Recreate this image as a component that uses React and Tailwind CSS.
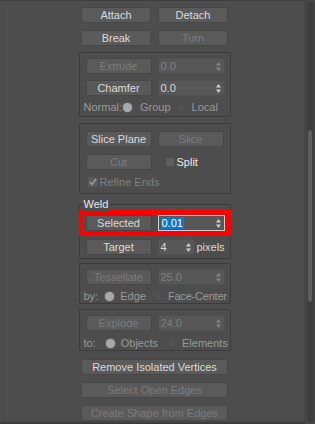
import React from "react";

const FONT = { fontFamily: '"Liberation Sans", Arial, sans-serif' };

function Btn({ children, w = "w-[70px]", dis }) {
  return (
    <div
      className={`${w} h-[16px] shrink-0 flex items-center justify-center whitespace-nowrap rounded-[2px] border border-[#474747] bg-[#5a5a5a] text-[11px] leading-none ${
        dis ? "text-[#7c7c7c]" : "text-[#dadada]"
      }`}
    >
      {children}
    </div>
  );
}

function Arrows({ dis }) {
  const c = dis ? "#858585" : "#d0d0d0";
  return (
    <svg width="5" height="9" viewBox="0 0 5 9" className="shrink-0">
      <polygon points="2.5,0 5,3.5 0,3.5" fill={c} />
      <polygon points="0,5.5 5,5.5 2.5,9" fill={c} />
    </svg>
  );
}

function Spin({ value, dis, w = "w-[67px]", sel }) {
  return (
    <div
      className={`${w} h-[16px] shrink-0 flex items-center justify-between bg-[#575757] border ${
        sel ? "border-[#cfcfcf]" : "border-[#505050]"
      } pl-[2px] pr-[3px] text-[11px] leading-none`}
    >
      {sel ? (
        <span className="bg-[#0a78d7] text-white h-[12px] px-[1px] flex items-center">{value}</span>
      ) : (
        <span className={dis ? "text-[#818181]" : "text-[#dadada]"}>{value}</span>
      )}
      <Arrows dis={dis} />
    </div>
  );
}

function Radio({ on }) {
  return (
    <span
      className={`block w-[9px] h-[9px] rounded-full shrink-0 ${
        on ? "bg-[#a9a9a9] shadow-[0_0_2px_#8f8f8f]" : "bg-[#525252] border border-[#4a4a4a]"
      }`}
    />
  );
}

function Group({ children, className = "" }) {
  return (
    <div className={`w-[152px] border border-[#3b3b3b] rounded-[2px] px-[6px] flex flex-col ${className}`}>
      {children}
    </div>
  );
}

const lbl = "whitespace-nowrap text-[11px] leading-none text-[#999999]";

export default function App() {
  return (
    <div className="w-[315px] h-[424px] bg-[#4d4d4d] flex overflow-hidden" style={FONT}>
      <div className="w-[305px] h-full flex flex-col border-t border-t-[#3e3e3e] border-b-2 border-b-[#3c3c3c] border-r border-r-[#444444]">
        <div className="flex-1 pl-[2px] flex flex-col items-center overflow-hidden border-l border-l-[#474747] ml-[2px]">
          <div className="mt-[6px] flex gap-[7px]">
            <Btn>Attach</Btn>
            <Btn>Detach</Btn>
          </div>
          <div className="mt-[7px] flex gap-[7px]">
            <Btn>Break</Btn>
            <Btn dis>Turn</Btn>
          </div>

          <Group className="mt-[6px] pt-[5px] pb-[2px]">
            <div className="flex gap-[6px]">
              <Btn w="w-[66px]" dis>Extrude</Btn>
              <Spin value="0.0" dis />
            </div>
            <div className="mt-[6px] flex gap-[6px]">
              <Btn w="w-[66px]">Chamfer</Btn>
              <Spin value="0.0" />
            </div>
            <div className="mt-[5px] -ml-[2px] h-[13px] flex items-center">
              <span className={lbl}>Normal:</span>
              <span className="ml-[1px]"><Radio on /></span>
              <span className={`ml-[8px] ${lbl}`}>Group</span>
              <span className="ml-[6px]"><Radio /></span>
              <span className={`ml-[6px] ${lbl}`}>Local</span>
            </div>
          </Group>

          <Group className="mt-[6px] pt-[7px] pb-[5px]">
            <div className="flex gap-[6px]">
              <Btn w="w-[66px]">Slice Plane</Btn>
              <Btn w="w-[66px]" dis>Slice</Btn>
            </div>
            <div className="mt-[7px] flex items-center">
              <Btn w="w-[66px]" dis>Cut</Btn>
              <span className="ml-[13px] w-[10px] h-[10px] bg-[#5f5f5f] border border-[#4c4c4c] rounded-[1px]" />
              <span className="ml-[2px] text-[11px] leading-none text-[#ececec]">Split</span>
            </div>
            <div className="mt-[6px] flex items-center h-[12px] ml-[2px]">
              <span className="w-[10px] h-[10px] bg-[#5a5a5a] rounded-[1px] flex items-center justify-center">
                <svg width="8" height="8" viewBox="0 0 8 8">
                  <polyline points="1,4 3,6.5 7,1" fill="none" stroke="#9a9a9a" strokeWidth="1.6" />
                </svg>
              </span>
              <span className="ml-[2px] text-[11px] leading-none text-[#818181]">Refine Ends</span>
            </div>
          </Group>

          <div className="mt-[4px] w-[152px] flex flex-col">
            <span className="relative z-10 self-start ml-[4px] px-[1px] bg-[#4d4d4d] h-[13px] text-[11px] leading-[13px] text-[#e8e8e8]">
              Weld
            </span>
            <div className="-mt-[7px] border border-[#3b3b3b] rounded-[2px] px-[6px] pt-[5px] pb-[3px] flex flex-col">
              <div className="-mx-[7px] border-[5px] border-[#ff0000] pl-[2px] flex gap-[6px]">
                <Btn w="w-[66px]">Selected</Btn>
                <Spin value="0.01" sel />
              </div>
              <div className="mt-[3px] flex items-center gap-[6px]">
                <Btn w="w-[66px]">Target</Btn>
                <Spin value="4" w="w-[37px]" />
                <span className="-ml-[4px] text-[11px] leading-none text-[#dadada]">pixels</span>
              </div>
            </div>
          </div>

          <Group className="mt-[4px] pt-[5px] pb-[0px]">
            <div className="flex gap-[6px]">
              <Btn w="w-[66px]" dis>Tessellate</Btn>
              <Spin value="25.0" dis />
            </div>
            <div className="mt-[5px] -ml-[2px] h-[13px] flex items-center">
              <span className={lbl}>by:</span>
              <span className="ml-[7px]"><Radio on /></span>
              <span className={`ml-[6px] ${lbl}`}>Edge</span>
              <span className="ml-[7px]"><Radio /></span>
              <span className={`ml-[6px] ${lbl} tracking-[-0.2px]`}>Face-Center</span>
            </div>
          </Group>

          <Group className="mt-[5px] pt-[5px] pb-[0px]">
            <div className="flex gap-[6px]">
              <Btn w="w-[66px]" dis>Explode</Btn>
              <Spin value="24.0" dis />
            </div>
            <div className="mt-[6px] -ml-[2px] h-[13px] flex items-center">
              <span className={lbl}>to:</span>
              <span className="ml-[10px]"><Radio on /></span>
              <span className={`ml-[6px] ${lbl}`}>Objects</span>
              <span className="ml-[10px]"><Radio /></span>
              <span className={`ml-[5px] ${lbl}`}>Elements</span>
            </div>
          </Group>

          <div className="mt-[8px]">
            <Btn w="w-[147px]">Remove Isolated Vertices</Btn>
          </div>
          <div className="mt-[7px]">
            <Btn w="w-[147px]" dis>Select Open Edges</Btn>
          </div>
          <div className="mt-[7px]">
            <Btn w="w-[147px]" dis>Create Shape from Edges</Btn>
          </div>
        </div>
      </div>
      <div className="w-[10px] h-full flex justify-center py-[2px] bg-[#474747]">
        <div className="w-[7px] h-full rounded-full bg-[#3d3d3d] flex flex-col items-center">
          <div className="mt-[128px] w-[4px] h-[172px] rounded-full bg-[#5e5e5e]" />
        </div>
      </div>
    </div>
  );
}
